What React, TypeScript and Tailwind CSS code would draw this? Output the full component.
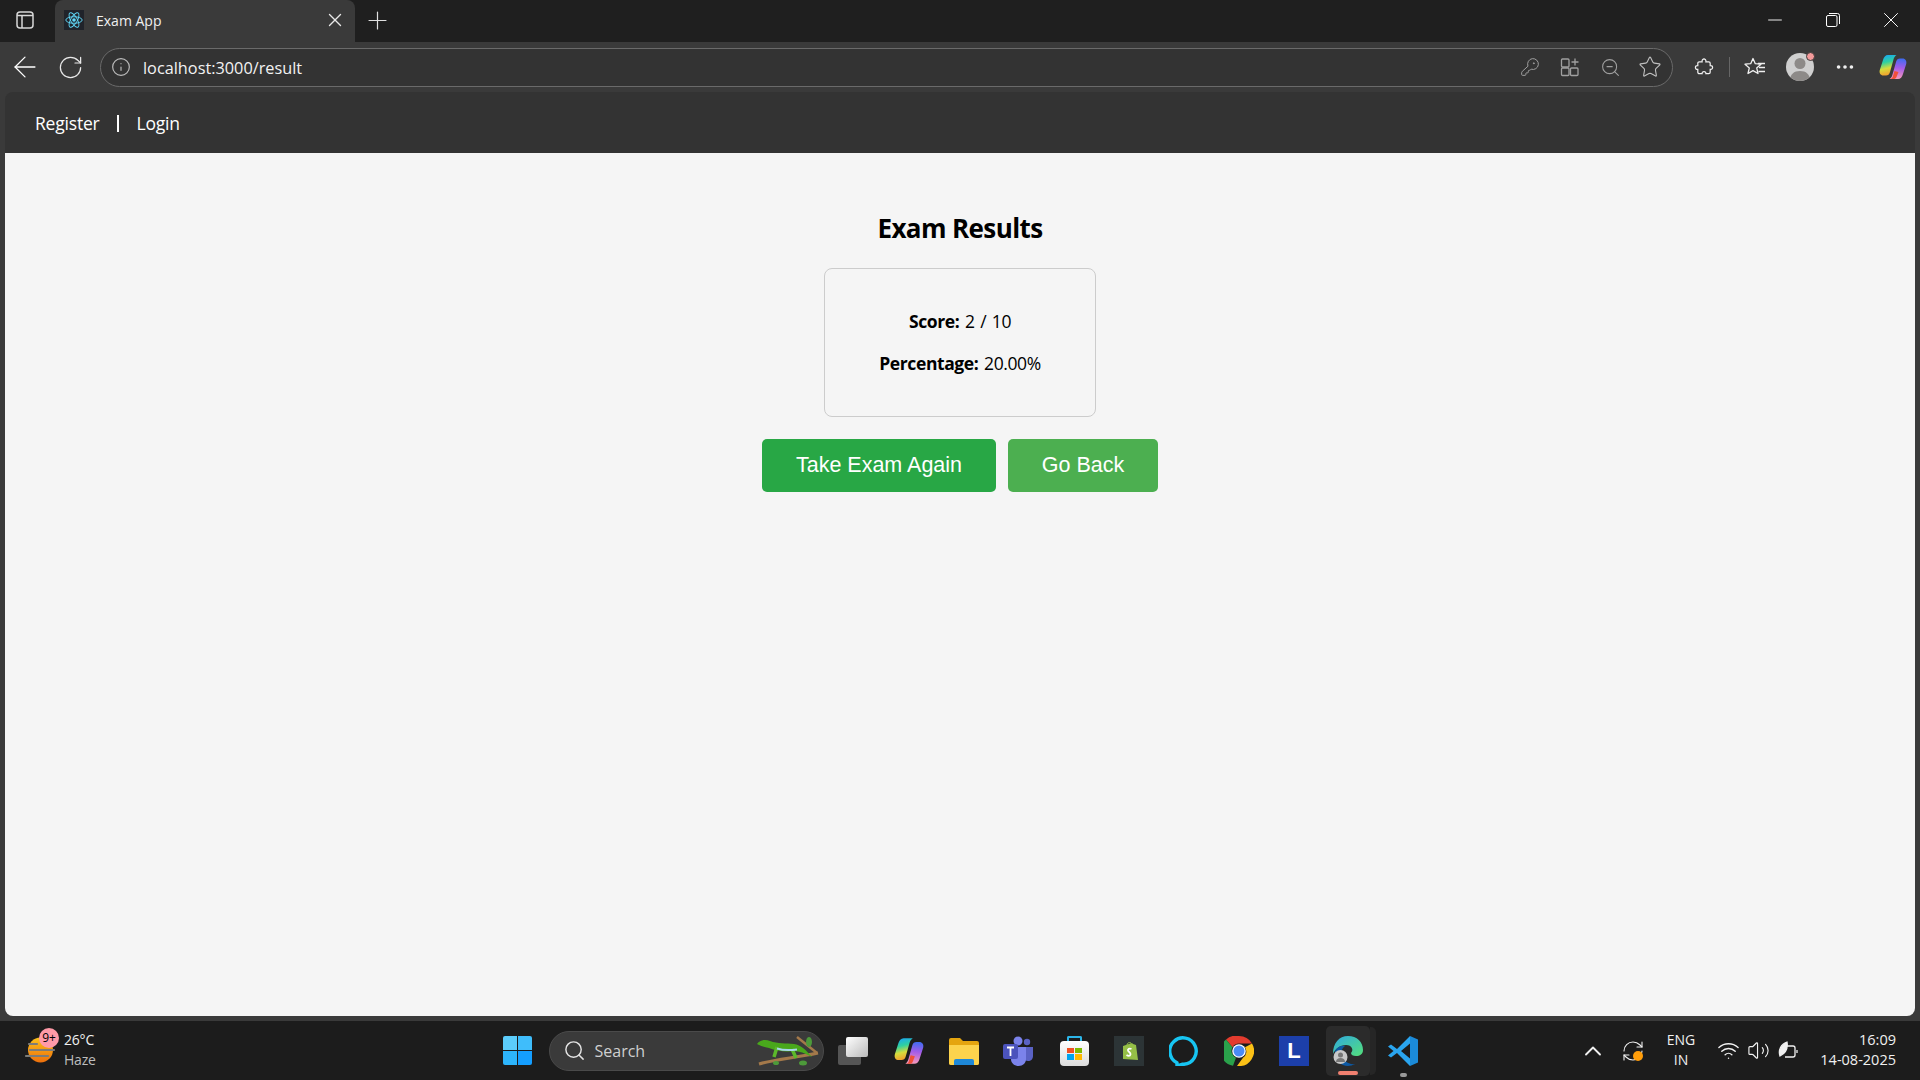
import { Search, Minus, X, Plus, ArrowLeft, RotateCw, RefreshCw, Info, KeyRound, ZoomOut, Star, MoreHorizontal, ChevronUp, Wifi, Volume2 } from "lucide-react";

const ui = "font-['Open_Sans','Noto_Sans',sans-serif]";

function CopilotIcon({ size = 28, id }: { size?: number; id: string }) {
  return (
    <svg width={size} height={size} viewBox="0 0 28 28">
      <defs>
        <linearGradient id={`${id}a`} x1="0.300" y1="0" x2="0.500" y2="1">
          <stop offset="0" stopColor="#1aa8f2" />
          <stop offset="0.35" stopColor="#2fd0a0" />
          <stop offset="0.65" stopColor="#d6dc3c" />
          <stop offset="1" stopColor="#f59a2c" />
        </linearGradient>
        <linearGradient id={`${id}b`} x1="0.600" y1="0" x2="0.500" y2="1">
          <stop offset="0" stopColor="#3f6bf0" />
          <stop offset="0.45" stopColor="#a45ce8" />
          <stop offset="1" stopColor="#f79ab8" />
        </linearGradient>
      </defs>
      <path d="M9 2h8.500c-1.500 1-2.500 2.500-3 4.500L11 19c-.6 2.500-2 3.500-4 3.500H4.500C1.500 22.500 0 20 .8 17L4 7c.8-3 2.500-5 5-5z" fill={`url(#${id}a)`} />
      <path d="M19 26h-8.500c1.500-1 2.500-2.500 3-4.500L17 9c.6-2.500 2-3.500 4-3.500h2.500c3 0 4.500 2.500 3.700 5.500L24 21c-.8 3-2.500 5-5 5z" fill={`url(#${id}b)`} />
      <path d="M10.500 26c2 0 3-1 3.500-3l1.500-5 4 1-2 5c-.6 1.500-1.500 2-3 2z" fill="#f0503a" />
    </svg>
  );
}

function ReactIcon() {
  return (
    <div className="w-5 h-5 bg-[#20232a] flex items-center justify-center">
      <svg width="20" height="20" viewBox="-11 -11 22 22" fill="none" stroke="#61dafb" strokeWidth="1">
        <circle r="2" fill="#61dafb" stroke="none" />
        <ellipse rx="9" ry="3.600" />
        <ellipse rx="9" ry="3.600" transform="rotate(60)" />
        <ellipse rx="9" ry="3.600" transform="rotate(120)" />
      </svg>
    </div>
  );
}

function TabStrip() {
  return (
    <div className="h-[42px] bg-[#1f1f1f] flex shrink-0">
      <div className="w-[50px] mr-[5px] flex items-center justify-center pb-[2px]">
        <svg width="18" height="18" viewBox="0 0 18 18" fill="none" stroke="#d8d8d8" strokeWidth="1.500">
          <rect x="1" y="1" width="16" height="16" rx="3" />
          <path d="M1 4.500h16M6 4.500V17" />
        </svg>
      </div>
      <div className="w-[300px] bg-[#3a3a3a] rounded-t-lg flex items-center pl-[9px] pr-[9px] pb-[2px]">
        <ReactIcon />
        <span className={`${ui} text-[#f0f0f0] text-[14px] ml-3 flex-1`}>Exam App</span>
        <X size={22} className="text-[#e8e8e8]" strokeWidth={1.500} />
      </div>
      <div className="w-[44px] flex items-center justify-center pb-[2px]">
        <Plus size={29} className="text-[#e0e0e0]" strokeWidth={1} />
      </div>
      <div className="flex-1" />
      <div className="flex items-center text-white pb-[2px]">
        <div className="w-[58px] flex justify-center"><Minus size={22} strokeWidth={1} /></div>
        <div className="w-[58px] flex justify-center">
          <svg width="14" height="14" viewBox="0 0 14 14" fill="none" stroke="white" strokeWidth="1">
            <rect x="0.500" y="2.500" width="10.500" height="11" rx="1.500" />
            <path d="M3 .500h8.500a2 2 0 0 1 2 2V11" />
          </svg>
        </div>
        <div className="w-[58px] flex justify-center"><X size={26} strokeWidth={0.900} /></div>
      </div>
    </div>
  );
}

function ToolBtn({ children }: { children: React.ReactNode }) {
  return <div className="w-[40px] h-[36px] flex items-center justify-center shrink-0">{children}</div>;
}

function Toolbar() {
  return (
    <div className="h-[50px] bg-[#3a3a3a] flex items-center shrink-0">
      <div className="w-[50px] flex justify-center"><ArrowLeft size={34} className="text-white" strokeWidth={0.900} /></div>
      <div className="w-[40px] flex justify-center"><RotateCw size={27} className="text-[#e8e8e8]" strokeWidth={1.100} /></div>
      <div className="ml-[10px] w-[1573px] h-[39px] rounded-full bg-[#333] border border-[#6a6a6a] flex items-center pl-[10px] pr-[2px]">
        <Info size={20} className="text-[#bcbcbc]" strokeWidth={1.400} />
        <span className={`${ui} text-[#f2f2f2] text-[16.300px] ml-[12px] pt-[2px] flex-1`}>localhost:3000/result</span>
        <div className="flex items-center text-[#a0a0a0]">
          <ToolBtn><KeyRound size={20} strokeWidth={1.200} /></ToolBtn>
          <ToolBtn>
            <svg width="20" height="20" viewBox="0 0 20 20" fill="none" stroke="currentColor" strokeWidth="1.300">
              <rect x="1.500" y="2" width="7.500" height="8" rx="1" />
              <rect x="1.500" y="11" width="7.500" height="7.500" rx="1" />
              <rect x="10.500" y="11" width="7.500" height="7.500" rx="1" />
              <path d="M15 1.500v7M11.500 5h7" />
            </svg>
          </ToolBtn>
          <ToolBtn><ZoomOut size={21} strokeWidth={1.200} /></ToolBtn>
          <ToolBtn><Star size={24} strokeWidth={1.100} className="text-[#c0c0c0]" /></ToolBtn>
        </div>
      </div>
      <div className="ml-[11px] flex items-center text-[#efefef]">
        <ToolBtn>
          <svg width="20" height="20" viewBox="0 0 21 20" fill="none" stroke="currentColor" strokeWidth="1.300">
            <path d="M10 1.500c1.800 0 2.800 1.200 2.500 3h3a1.500 1.500 0 0 1 1.500 1.500v2.500c1.800-.3 2.500.9 2.500 2s-.7 2.300-2.500 2v3a1.500 1.500 0 0 1-1.500 1.500h-3c.2-1.500-.8-2.200-2-2.200s-2.200.7-2 2.200h-3a1.500 1.500 0 0 1-1.500-1.500v-3c-1.700.3-2.500-.8-2.500-2s.8-2.300 2.500-2V6a1.500 1.500 0 0 1 1.500-1.500h3c-.3-1.800.7-3 2.500-3z" />
          </svg>
        </ToolBtn>
        <div className="w-px h-5 bg-[#666] ml-[5px]" />
        <div className="ml-[5px]">
          <ToolBtn>
            <svg width="22" height="20" viewBox="0 0 22 20" fill="none" stroke="currentColor" strokeWidth="1.300" strokeLinejoin="round">
              <path d="M9 1.500l2.300 5.200 5.700.5-4.300 3.700 1.300 5.600L9 13.600l-5 2.900 1.300-5.600L1 7.200l5.700-.5z" />
              <path d="M14 6.500h7M15 10.500h6M14.500 14.500h6.500" />
            </svg>
          </ToolBtn>
        </div>
        <div className="ml-[5px]">
          <ToolBtn>
            <div className="relative w-7 h-7">
              <div className="w-7 h-7 rounded-full bg-[#cfcfcf] overflow-hidden">
                <svg width="28" height="28" viewBox="0 0 28 28" fill="#8d8a88">
                  <circle cx="14" cy="10.500" r="5.500" />
                  <path d="M4 28c0-7 4-10 10-10s10 3 10 10z" />
                </svg>
              </div>
              <div className="absolute -top-[1px] -right-[1px] w-[9px] h-[9px] rounded-full bg-[#f49a9a] border border-[#3a3a3a]" />
            </div>
          </ToolBtn>
        </div>
        <div className="ml-[5px]">
          <ToolBtn><MoreHorizontal size={22} strokeWidth={2} /></ToolBtn>
        </div>
        <div className="ml-[8px]">
          <ToolBtn><CopilotIcon id="cptool" /></ToolBtn>
        </div>
      </div>
    </div>
  );
}

function NavBar() {
  return (
    <div className={`${ui} h-[61px] bg-[#333] rounded-t-lg flex items-center pl-[30px] pt-[2px] text-white text-[17.500px] tracking-[-0.200px] shrink-0`}>
      <a>Register</a>
      <span className="ml-[17px] mr-[18px] w-[2px] h-[17px] bg-white" />
      <a>Login</a>
    </div>
  );
}

function ResultPage() {
  return (
    <div className="flex-1 bg-[#f5f5f5] rounded-b-lg flex flex-col items-center pt-[57px]">
      <h2 className={`${ui} font-bold text-[26px] leading-[36px] text-black tracking-[-0.600px]`}>Exam Results</h2>
      <div className={`${ui} mt-[22px] w-[272px] h-[149px] border border-[#ccc] rounded-lg flex flex-col items-center justify-center gap-[20px] pb-[2px] text-black text-[17.500px] leading-[22px] tracking-[-0.400px] [word-spacing:1.500px]`}>
        <p><b>Score:</b> 2 / 10</p>
        <p><b>Percentage:</b> 20.00%</p>
      </div>
      <div className="mt-[22px] flex gap-[12px] font-['Liberation_Sans',sans-serif] text-white text-[21.500px]">
        <button className="w-[234px] h-[53px] bg-[#28a745] rounded-[5px]">Take Exam Again</button>
        <button className="w-[150px] h-[53px] bg-[#4caf50] rounded-[5px]">Go Back</button>
      </div>
    </div>
  );
}

function WeatherIcon() {
  return (
    <div className="relative w-[32px] h-[32px]">
      <svg width="32" height="32" viewBox="0 0 32 32">
        <defs>
          <linearGradient id="sun" x1="0" y1="0" x2="0" y2="1">
            <stop offset="0" stopColor="#fbc21b" />
            <stop offset="1" stopColor="#ec6f0c" />
          </linearGradient>
        </defs>
        <circle cx="16.500" cy="15" r="12.500" fill="url(#sun)" />
        <path d="M5 9h8M6 15h20M16 15h14M2 21h22" stroke="#7c7c78" strokeWidth="2.200" strokeLinecap="round" />
      </svg>
      <div className="absolute -top-[7px] left-[15px] w-[20px] h-[20px] rounded-full bg-[#ff9aa8] text-black text-[12px] flex items-center justify-center font-['Open_Sans',sans-serif]">9+</div>
    </div>
  );
}

function TaskIcon({ children }: { children: React.ReactNode }) {
  return <div className="w-[55px] h-[44px] flex items-center justify-center shrink-0">{children}</div>;
}

function Gecko() {
  return (
    <svg width="62" height="30" viewBox="0 0 62 30">
      <path d="M2 28C18 23 38 22 61 17" stroke="#a4794a" strokeWidth="3" fill="none" />
      <path d="M40 1l20 16" stroke="#a4794a" strokeWidth="2.500" fill="none" />
      <path d="M0 8c3-4 8-5 13-3 8 3 16 2 24 3 7 1 12 6 18 13-7-4-13-6-18-6-8 1-18 0-25-3C8 11 3 10 0 8z" fill="#49a81c" />
      <path d="M20 11l-3 10M35 13l4 9" stroke="#5cb82a" strokeWidth="3.500" />
      <path d="M20 12.500c6 2 12 2 20 1" stroke="#a8d8ea" strokeWidth="2" fill="none" />
      <ellipse cx="52" cy="6" rx="3" ry="5" fill="#4d9a3a" />
      <ellipse cx="46" cy="27" rx="4" ry="2.500" fill="#4d9a3a" />
      <ellipse cx="19" cy="27" rx="3" ry="2" fill="#4d9a3a" />
    </svg>
  );
}

function Taskbar() {
  return (
    <div className="h-[59px] bg-[#1c1c1c] flex items-center shrink-0">
      <div className={`${ui} flex-1 flex items-center pl-[24px]`}>
        <WeatherIcon />
        <div className="ml-[8px] text-[14px] leading-[20px] tracking-[-0.200px] pb-[2px]">
          <div className="text-[#f0f0f0]">26°C</div>
          <div className="text-[#bdbdbd]">Haze</div>
        </div>
      </div>
      <div className="flex items-center">
        <TaskIcon>
          <div className="grid grid-cols-2 gap-[1px] w-[29px] h-[29px]">
            <div className="bg-[#5ccdfb] rounded-tl-[2px]" />
            <div className="bg-[#3fbdfb] rounded-tr-[2px]" />
            <div className="bg-[#2db5fc] rounded-bl-[2px]" />
            <div className="bg-[#149eff] rounded-br-[2px]" />
          </div>
        </TaskIcon>
        <div className={`${ui} w-[275px] h-[40px] rounded-full bg-[#3a3a3a] border border-[#4a4a4a] flex items-center pl-[13px] pr-[4px] ml-[4px] mr-[3px]`}>
          <Search size={23} className="text-[#e4e4e4]" strokeWidth={1.500} />
          <span className="ml-[9px] text-[#cfcfcf] text-[16px] flex-1">Search</span>
          <Gecko />
        </div>
        <TaskIcon>
          <div className="relative w-[30px] h-[28px] -ml-[2px]">
            <div className="absolute left-0 bottom-0 w-[23px] h-[20px] rounded-[2px] bg-[#555]" />
            <div className="absolute right-0 top-0 w-[22px] h-[20px] rounded-[2px] bg-gradient-to-br from-white to-[#bbb]" />
          </div>
        </TaskIcon>
        <TaskIcon><CopilotIcon size={30} id="cptask" /></TaskIcon>
        <TaskIcon>
          <svg width="30" height="28" viewBox="0 0 30 28">
            <path d="M0 3a2 2 0 0 1 2-2h9l3 3h14a2 2 0 0 1 2 2v20a2 2 0 0 1-2 2H2a2 2 0 0 1-2-2z" fill="#e5a50f" />
            <path d="M0 8h30v18a2 2 0 0 1-2 2H2a2 2 0 0 1-2-2z" fill="#fcd34d" />
            <path d="M5 28v-4a2 2 0 0 1 2-2h16a2 2 0 0 1 2 2v4z" fill="#1e88d8" />
          </svg>
        </TaskIcon>
        <TaskIcon>
          <svg width="32" height="30" viewBox="0 0 32 30">
            <circle cx="24" cy="6" r="3.200" fill="#5a62c4" />
            <path d="M20 11h10v9c0 3-2 5-5 5-2 0-4-1-5-3z" fill="#5a62c4" />
            <circle cx="15" cy="5" r="4.500" fill="#7b83eb" />
            <path d="M8 11h15v12c0 4-3 7-7.500 7S8 27 8 23z" fill="#7b83eb" />
            <rect x="0" y="8" width="15" height="15" rx="2" fill="#4b53bc" />
            <path d="M4 11.500h7M7.500 11.500V20" stroke="white" strokeWidth="1.800" />
          </svg>
        </TaskIcon>
        <TaskIcon>
          <div className="relative w-[29px] h-[30px]">
            <div className="absolute top-0 left-[7px] w-[15px] h-[8px] border-2 border-b-0 border-[#2cb5e8] rounded-t-[2px]" />
            <div className="absolute bottom-0 w-[29px] h-[25px] rounded-[4px] bg-gradient-to-b from-white to-[#dcdcdc] grid grid-cols-2 gap-[1px] p-[7px] pb-[6px]">
              <div className="bg-[#f25022]" />
              <div className="bg-[#7fba00]" />
              <div className="bg-[#00a4ef]" />
              <div className="bg-[#ffb900]" />
            </div>
          </div>
        </TaskIcon>
        <TaskIcon>
          <div className="w-[30px] h-[30px] bg-[#2c3436] flex items-center justify-center">
            <svg width="18" height="20" viewBox="0 0 18 20">
              <path d="M3 5l9-3 1 1 3 1 2 15-15-1z" fill="#95bf47" />
              <path d="M7 4c0-2 2-3 4-2" stroke="#95bf47" strokeWidth="1" fill="none" />
              <path d="M11.500 8c-2-1-4 0-3.500 1.500S11 11.500 10.500 13.500 8 15 6.500 14" stroke="white" strokeWidth="1.800" fill="none" />
            </svg>
          </div>
        </TaskIcon>
        <TaskIcon>
          <svg width="30" height="30" viewBox="0 0 30 30" fill="none">
            <path d="M8 26.800A13.200 13.200 0 1 1 15 28.200l-2 .1-5 1.500z" stroke="#17c5f2" strokeWidth="3.400" strokeLinejoin="round" />
          </svg>
        </TaskIcon>
        <TaskIcon>
          <svg width="30" height="30" viewBox="0 0 30 30">
            <path d="M15 0a15 15 0 0 1 13 7.500H15a7.500 7.500 0 0 0-6.500 3.750L2 3.500A15 15 0 0 1 15 0z" fill="#e33b2e" />
            <path d="M2 3.500l6.500 7.750a7.500 7.500 0 0 0 3.500 10.500L9 29.700A15 15 0 0 1 2 3.500z" fill="#2aa14b" />
            <path d="M28 7.500a15 15 0 0 1-15 22.400l6-8.150a7.500 7.500 0 0 0 2-10.500z" fill="#fbc116" />
            <circle cx="15" cy="15" r="6.800" fill="white" />
            <circle cx="15" cy="15" r="5.500" fill="#4a8bf5" />
          </svg>
        </TaskIcon>
        <TaskIcon>
          <div className="w-[30px] h-[30px] bg-[#1c3faa] flex items-center justify-center text-white font-bold text-[22px] font-['Liberation_Sans',sans-serif]">L</div>
        </TaskIcon>
        <div className="relative w-[44px] h-[50px] ml-[4px] mr-[6px] bg-[#2b2b2b] rounded-[5px] flex items-center justify-center shrink-0">
          <div className="absolute -right-[6px] top-[1px] bottom-[1px] w-[6px] bg-[#262626] rounded-r-[5px]" />
          <svg width="30" height="30" viewBox="0 0 30 30">
            <defs>
              <linearGradient id="edg" x1="0" y1="0" x2="1" y2="1">
                <stop offset="0" stopColor="#2fa9e0" />
                <stop offset="1" stopColor="#54e07a" />
              </linearGradient>
            </defs>
            <path d="M15 0c9 0 15 6 15 14 0 4-3 6-7 6-3 0-5-1-5-3 3-3 1-8-5-8-6 0-11 4-13 9C0 7 6 0 15 0z" fill="url(#edg)" />
            <path d="M2 15c2-4 6-6 10-5-3 2-4 5-3 9 1 5 6 10 13 9-2 1-5 2-7 2C8 30 1 24 2 15z" fill="#0c59a4" />
            <circle cx="7.500" cy="21" r="7" fill="#c8c8c8" />
            <circle cx="7.500" cy="19" r="2.500" fill="#777" />
            <path d="M3 26c0-3 2-4 4.500-4s4.500 1 4.500 4z" fill="#777" />
          </svg>
          <div className="absolute bottom-[1px] left-[12px] w-[20px] h-[4px] rounded-full bg-[#f08070]" />
        </div>
        <div className="relative w-[55px] h-[44px] flex items-center justify-center shrink-0">
          <svg width="30" height="30" viewBox="0 0 30 30">
            <path d="M22 0l8 3.500v23L22 30z" fill="#1b8ad8" />
            <path d="M22 0L9 13 3 8.500 0 10.500 5.500 15 0 19.500 3 21.500 9 17l13 13v-7.500L13 15l9-7.500z" fill="#2aa5ef" />
          </svg>
          <div className="absolute -bottom-[4px] left-[24px] w-[7px] h-[4px] rounded-full bg-[#9a9a9a]" />
        </div>
      </div>
      <div className={`${ui} flex-1 flex items-center justify-end pr-[24px] text-[#f0f0f0]`}>
        <div className="w-[30px] flex justify-center"><ChevronUp size={28} strokeWidth={1.600} /></div>
        <div className="w-[30px] ml-[10px] flex justify-center">
          <div className="relative w-[24px] h-[24px]">
            <RefreshCw size={24} strokeWidth={1.100} />
            <div className="absolute right-[2px] bottom-[2px] w-[10px] h-[10px] rounded-full bg-[#ff9d0a]" />
          </div>
        </div>
        <div className="ml-[13px] w-[40px] text-center text-[14px] leading-[20px] pb-[2px]">ENG<br />IN</div>
        <div className="ml-[12px] w-[30px] flex justify-center"><Wifi size={23} strokeWidth={1.500} /></div>
        <div className="w-[30px] flex justify-center"><Volume2 size={23} strokeWidth={1.200} /></div>
        <div className="w-[30px] flex justify-center">
          <svg width="22" height="20" viewBox="0 0 22 20" fill="none" stroke="currentColor" strokeWidth="1.300">
            <path d="M7 5h9a2 2 0 0 1 2 2v7a2 2 0 0 1-2 2H8" />
            <path d="M20 9v3" />
            <path d="M3 15C1 9 4 3 10 1c1 6-1 11-7 14z" fill="currentColor" />
          </svg>
        </div>
        <div className="ml-[11px] w-[82px] text-right text-[14.500px] leading-[20px] pb-[2px] whitespace-nowrap">16:09<br />14-08-2025</div>
      </div>
    </div>
  );
}

export default function App() {
  return (
    <div className="w-[1920px] h-[1080px] flex flex-col bg-[#3a3a3a] overflow-hidden">
      <TabStrip />
      <Toolbar />
      <div className="flex-1 flex flex-col mx-[5px] mb-[5px] min-h-0">
        <NavBar />
        <ResultPage />
      </div>
      <Taskbar />
    </div>
  );
}
